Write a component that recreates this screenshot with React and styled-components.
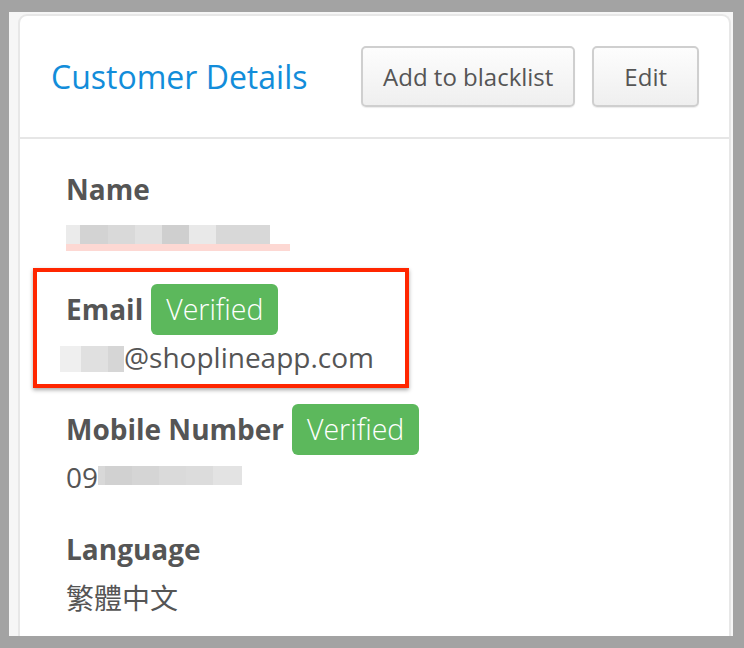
import React from "react";
import styled, { createGlobalStyle } from "styled-components";

const GlobalStyle = createGlobalStyle`
  body {
    margin: 0;
    background: #a3a3a3;
    font-family: "Open Sans", "Noto Sans CJK TC", sans-serif;
  }
`;

const Frame = styled.div`
  margin: 12px 11px 0 9px;
  height: 624px;
  padding: 2px 2px 0 9px;
  background: #f6f6f6;
  box-sizing: border-box;
  display: flex;
`;

const Card = styled.div`
  flex: 1;
  background: #fff;
  border: 2px solid #e7e7e7;
  border-bottom: none;
  border-radius: 9px 9px 0 0;
  overflow: hidden;
`;

const Header = styled.div`
  height: 121px;
  display: flex;
  align-items: center;
  justify-content: space-between;
  padding: 0 30px 0 31px;
  border-bottom: 2px solid #e6e6e6;
`;

const Title = styled.h2`
  margin: 0;
  font-size: 32px;
  font-weight: 400;
  color: #128dda;
`;

const Actions = styled.div`
  display: flex;
  gap: 17px;
`;

const Button = styled.button`
  height: 61px;
  padding: 0 ${(p) => p.$pad || 20}px;
  font-family: inherit;
  font-size: 24px;
  color: #555;
  background: linear-gradient(#fdfdfd, #efefef);
  border: 2px solid #cfcfcf;
  border-radius: 5px;
  box-shadow: 0 1px 1px rgba(0, 0, 0, 0.08);
`;

const Body = styled.div`
  position: relative;
  padding: 25px 0 0 46px;
`;

const Field = styled.div`
  margin-bottom: 24px;
`;

const LabelRow = styled.div`
  height: 50px;
  display: flex;
  align-items: center;
  gap: 8px;
`;

const Label = styled.span`
  font-size: 28px;
  font-weight: 700;
  color: #555;
`;

const Badge = styled.span`
  display: inline-flex;
  align-items: center;
  height: 51px;
  padding: 0 15px;
  border-radius: 6px;
  background: #5cb85c;
  color: #fff;
  font-size: 28.5px;
  font-weight: 300;
`;

const Value = styled.div`
  height: 46px;
  display: flex;
  align-items: center;
  font-size: 28px;
  color: #555;
  margin-left: ${(p) => p.$shift || 0}px;
`;

const Masked = styled.div`
  position: relative;
  display: flex;
  margin-top: ${(p) => p.$top || 0}px;
`;

const Cell = styled.span`
  display: block;
  width: ${(p) => p.$w}px;
  height: ${(p) => p.$h || 19}px;
  background: ${(p) => p.$c};
`;

const Underline = styled.span`
  position: absolute;
  left: 0;
  top: 100%;
  width: 224px;
  height: 7px;
  background: #fdd8d3;
`;

const Highlight = styled.div`
  position: absolute;
  left: 13px;
  top: 129px;
  width: 368px;
  height: 112px;
  border: 4px solid #ff2600;
  box-shadow: 0 2px 4px rgba(0, 0, 0, 0.35);
  pointer-events: none;
`;

const nameCells = [
  [14, "#ebebeb"],
  [28, "#d3d3d3"],
  [27, "#d9d9d9"],
  [27, "#e1e1e1"],
  [27, "#cfcfcf"],
  [27, "#e9e9e9"],
  [54, "#d8d8d8"],
];

const emailCells = [
  [21, "#efefef"],
  [27, "#e0e0e0"],
  [16, "#d6d6d6"],
];

const phoneCells = [
  [7, "#d8d8d8"],
  [27, "#d1d1d1"],
  [27, "#d5d5d5"],
  [27, "#dadada"],
  [27, "#dcdcdc"],
  [29, "#e3e3e3"],
];

function MaskCells({ cells, h }) {
  return cells.map(([w, c], i) => <Cell key={i} $w={w} $h={h} $c={c} />);
}

export default function App() {
  return (
    <>
      <GlobalStyle />
      <Frame>
        <Card>
          <Header>
            <Title>Customer Details</Title>
            <Actions>
              <Button>Add to blacklist</Button>
              <Button $pad={30}>Edit</Button>
            </Actions>
          </Header>
          <Body>
            <Field>
              <LabelRow>
                <Label>Name</Label>
              </LabelRow>
              <Value>
                <Masked $top={-6}>
                  <MaskCells cells={nameCells} />
                  <Underline />
                </Masked>
              </Value>
            </Field>
            <Field>
              <LabelRow>
                <Label>Email</Label>
                <Badge>Verified</Badge>
              </LabelRow>
              <Value $shift={-6}>
                <Masked $top={4}>
                  <MaskCells cells={emailCells} h={26} />
                </Masked>
                @shoplineapp.com
              </Value>
            </Field>
            <Field>
              <LabelRow>
                <Label>Mobile Number</Label>
                <Badge>Verified</Badge>
              </LabelRow>
              <Value>
                09
                <Masked $top={-4}>
                  <MaskCells cells={phoneCells} />
                </Masked>
              </Value>
            </Field>
            <Field>
              <LabelRow>
                <Label>Language</Label>
              </LabelRow>
              <Value>繁體中文</Value>
            </Field>
            <Highlight />
          </Body>
        </Card>
      </Frame>
    </>
  );
}
